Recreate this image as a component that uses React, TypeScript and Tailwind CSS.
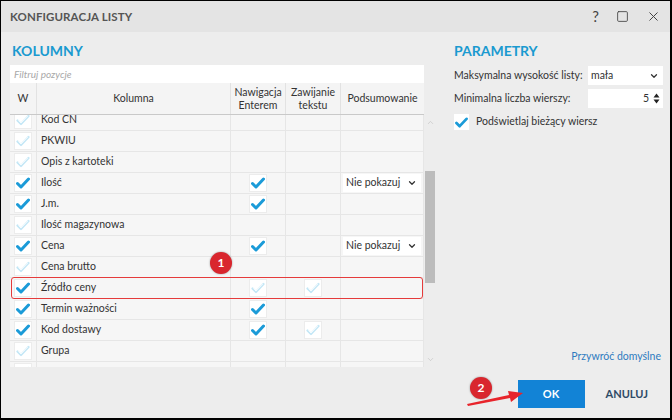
import { ChevronDown, ChevronUp, X, Square } from "lucide-react";

type Mark = "on" | "off" | null;

interface Row {
  name: string;
  w: Mark;
  nav: Mark;
  wrap: Mark;
  sum?: string;
}

const rows: Row[] = [
  { name: "Kod CN", w: "off", nav: null, wrap: null },
  { name: "PKWIU", w: "off", nav: null, wrap: null },
  { name: "Opis z kartoteki", w: "off", nav: null, wrap: null },
  { name: "Ilość", w: "on", nav: "on", wrap: null, sum: "Nie pokazuj" },
  { name: "J.m.", w: "on", nav: "on", wrap: null },
  { name: "Ilość magazynowa", w: "off", nav: null, wrap: null },
  { name: "Cena", w: "on", nav: "on", wrap: null, sum: "Nie pokazuj" },
  { name: "Cena brutto", w: "off", nav: null, wrap: null },
  { name: "Źródło ceny", w: "on", nav: "off", wrap: "off" },
  { name: "Termin ważności", w: "on", nav: "on", wrap: null },
  { name: "Kod dostawy", w: "on", nav: "on", wrap: "off" },
  { name: "Grupa", w: "off", nav: null, wrap: null },
  { name: "", w: "off", nav: null, wrap: null },
];

function Check({ on }: { on: boolean }) {
  return (
    <div className="w-[18px] h-[18px] bg-white border border-[#ececec] flex items-center justify-center">
      {on ? (
        <svg width="14" height="12" viewBox="0 0 14 12">
          <path d="M1.5 6.5 L5 10 L12.5 2" fill="none" stroke="#1b9bd8" strokeWidth="3" strokeLinecap="round" strokeLinejoin="round" />
        </svg>
      ) : (
        <svg width="14" height="12" viewBox="0 0 14 12">
          <path d="M1.5 6.5 L5 10 L12.5 2" fill="none" stroke="#c4e7f6" strokeWidth="2.2" strokeLinecap="round" strokeLinejoin="round" />
          <path d="M2.6 6.6 L5 9 L11.6 2.2" fill="none" stroke="#ffffff" strokeWidth="0.8" strokeLinecap="round" strokeLinejoin="round" />
        </svg>
      )}
    </div>
  );
}

function Cell({ w, children, className = "" }: { w: string; children?: React.ReactNode; className?: string }) {
  return (
    <div className={`${w} h-full shrink-0 border-r border-b border-[#e6e6e6] bg-[#f6f6f6] flex items-center ${className}`}>
      {children}
    </div>
  );
}

export default function App() {
  return (
    <div
      className="relative w-[672px] h-[420px] overflow-hidden bg-[#ededed] border-t border-l border-r-2 border-b-2 border-black flex flex-col text-[#333] text-[10.5px]"
      style={{ fontFamily: 'Lato, "Noto Sans", sans-serif' }}
    >
      {/* Title bar */}
      <div className="h-[31px] shrink-0 bg-[#e4e4e4] flex items-center justify-between pl-[9px] pr-[9px]">
        <span className="font-bold text-[11.5px] text-[#555] tracking-[0.1px]">KONFIGURACJA LISTY</span>
        <div className="flex items-center gap-[17px] text-[#444]">
          <span className="text-[15px] leading-none">?</span>
          <Square size={13} strokeWidth={1.6} />
          <X size={15} strokeWidth={1.6} />
        </div>
      </div>

      <div className="flex flex-1 min-h-0">
        {/* Left: columns */}
        <div className="w-[453px] shrink-0 pl-[9px] pt-[9px]">
          <div className="text-[#1a9ad0] font-bold text-[14px] leading-[20px] pl-[2px]">KOLUMNY</div>
          <div className="mt-[4px] w-[414px] h-[18px] bg-white flex items-center pl-[4px] text-[10px] italic text-[#a8a8a8]">
            Filtruj pozycje
          </div>
          {/* header */}
          <div className="w-[414px] h-[32px] flex bg-[#f4f4f4] border-b border-[#c9c9c9] text-[10.5px] text-[#333] leading-[13px]">
            <div className="w-[27px] flex items-center justify-center border-r border-[#e2e2e2]">W</div>
            <div className="w-[194px] flex items-center justify-center border-r border-[#e2e2e2]">Kolumna</div>
            <div className="w-[55px] flex items-center justify-center text-center border-r border-[#e2e2e2]">Nawigacja<br />Enterem</div>
            <div className="w-[55px] flex items-center justify-center text-center border-r border-[#e2e2e2]">Zawijanie<br />tekstu</div>
            <div className="w-[83px] flex items-center justify-center">Podsumowanie</div>
          </div>
          {/* body */}
          <div className="flex h-[252px] overflow-hidden">
            <div className="w-[414px] shrink-0 overflow-hidden">
              <div className="-mt-[5px]">
                {rows.map((r, i) => (
                  <div key={i} className="flex h-[21px]">
                    <Cell w="w-[27px]" className="justify-center">
                      {r.w && <Check on={r.w === "on"} />}
                    </Cell>
                    <Cell w="w-[194px]" className="pl-[4px] text-[10.5px]">
                      {r.name}
                    </Cell>
                    <Cell w="w-[55px]" className="justify-center">
                      {r.nav && <Check on={r.nav === "on"} />}
                    </Cell>
                    <Cell w="w-[55px]" className="justify-center">
                      {r.wrap && <Check on={r.wrap === "on"} />}
                    </Cell>
                    <Cell w="w-[83px]" className="justify-center">
                      {r.sum && (
                        <div className="w-[78px] h-[18px] bg-white flex items-center justify-between pl-[3px] pr-[4px] text-[10.5px]">
                          {r.sum}
                          <ChevronDown size={10} strokeWidth={3} className="text-[#333]" />
                        </div>
                      )}
                    </Cell>
                  </div>
                ))}
              </div>
            </div>
            {/* scrollbar */}
            <div className="w-[12px] shrink-0 flex flex-col items-center pt-[3px] pb-[3px]">
              <ChevronUp size={9} strokeWidth={1.5} className="text-[#bbb]" />
              <div className="mt-[44px] w-[10px] h-[112px] bg-[#bcbcbc]" />
              <div className="flex-1" />
              <ChevronDown size={9} strokeWidth={1.5} className="text-[#bbb]" />
            </div>
          </div>
        </div>

        {/* Right: parameters */}
        <div className="flex-1 flex flex-col pt-[9px] pr-[7px]">
          <div className="text-[#1a9ad0] font-bold text-[14px] leading-[20px]">PARAMETRY</div>
          <div className="mt-[5px] flex items-center justify-between h-[19px]">
            <span>Maksymalna wysokość listy:</span>
            <div className="w-[75px] h-[19px] bg-white flex items-center justify-between pl-[3px] pr-[4px]">
              mała
              <ChevronDown size={10} strokeWidth={3} />
            </div>
          </div>
          <div className="mt-[4px] flex items-center justify-between h-[19px]">
            <span>Minimalna liczba wierszy:</span>
            <div className="w-[75px] h-[19px] bg-white flex items-center justify-end pr-[3px] gap-[4px]">
              5
              <div className="flex flex-col items-center leading-none">
                <svg width="7" height="5" viewBox="0 0 7 5"><path d="M0.5 4.5 L3.5 0.5 L6.5 4.5 Z" fill="#222" /></svg>
                <svg width="7" height="5" viewBox="0 0 7 5" className="mt-[1px]"><path d="M0.5 0.5 L3.5 4.5 L6.5 0.5 Z" fill="#222" /></svg>
              </div>
            </div>
          </div>
          <div className="mt-[6px] flex items-center gap-[7px]">
            <div className="w-[15px] h-[16px] bg-white flex items-center justify-center">
              <svg width="13" height="11" viewBox="0 0 14 12">
                <path d="M1.5 6.5 L5 10 L12.5 2" fill="none" stroke="#1b9bd8" strokeWidth="3" strokeLinecap="round" strokeLinejoin="round" />
              </svg>
            </div>
            <span>Podświetlaj bieżący wiersz</span>
          </div>
          <div className="flex-1" />
          <div className="flex justify-end pr-[2px] text-[10.5px] text-[#2d7bbf]">Przywróć domyślne</div>
          <div className="mt-[15px] mb-[10px] flex items-center justify-end gap-[21px] pr-[15px]">
            <button className="w-[67px] h-[28px] bg-[#1283d6] text-white font-bold text-[11px]">OK</button>
            <button className="font-bold text-[11px] text-[#2e4a66]">ANULUJ</button>
          </div>
        </div>
      </div>

      {/* Annotations */}
      <div className="absolute left-[10px] top-[276px] w-[412px] h-[22px] border-[1.5px] border-[#e53b3b] rounded-[3px]" />
      <div className="absolute left-[209px] top-[251px] w-[22px] h-[22px] rounded-full bg-[#d9262e] text-white font-bold text-[12px] flex items-center justify-center shadow-[0_0_2px_rgba(0,0,0,0.4)]">1</div>
      <div className="absolute left-[469px] top-[376px] w-[22px] h-[22px] rounded-full bg-[#d9262e] text-white font-bold text-[12px] flex items-center justify-center shadow-[0_0_2px_rgba(0,0,0,0.4)]">2</div>
      <svg className="absolute left-[460px] top-[384px]" width="66" height="24" viewBox="0 0 66 24">
        <path d="M6 19 L48 10 L47 6 L62 8 L50 17 L49 13 L7 21 Z" fill="#e8242b" />
      </svg>
    </div>
  );
}
